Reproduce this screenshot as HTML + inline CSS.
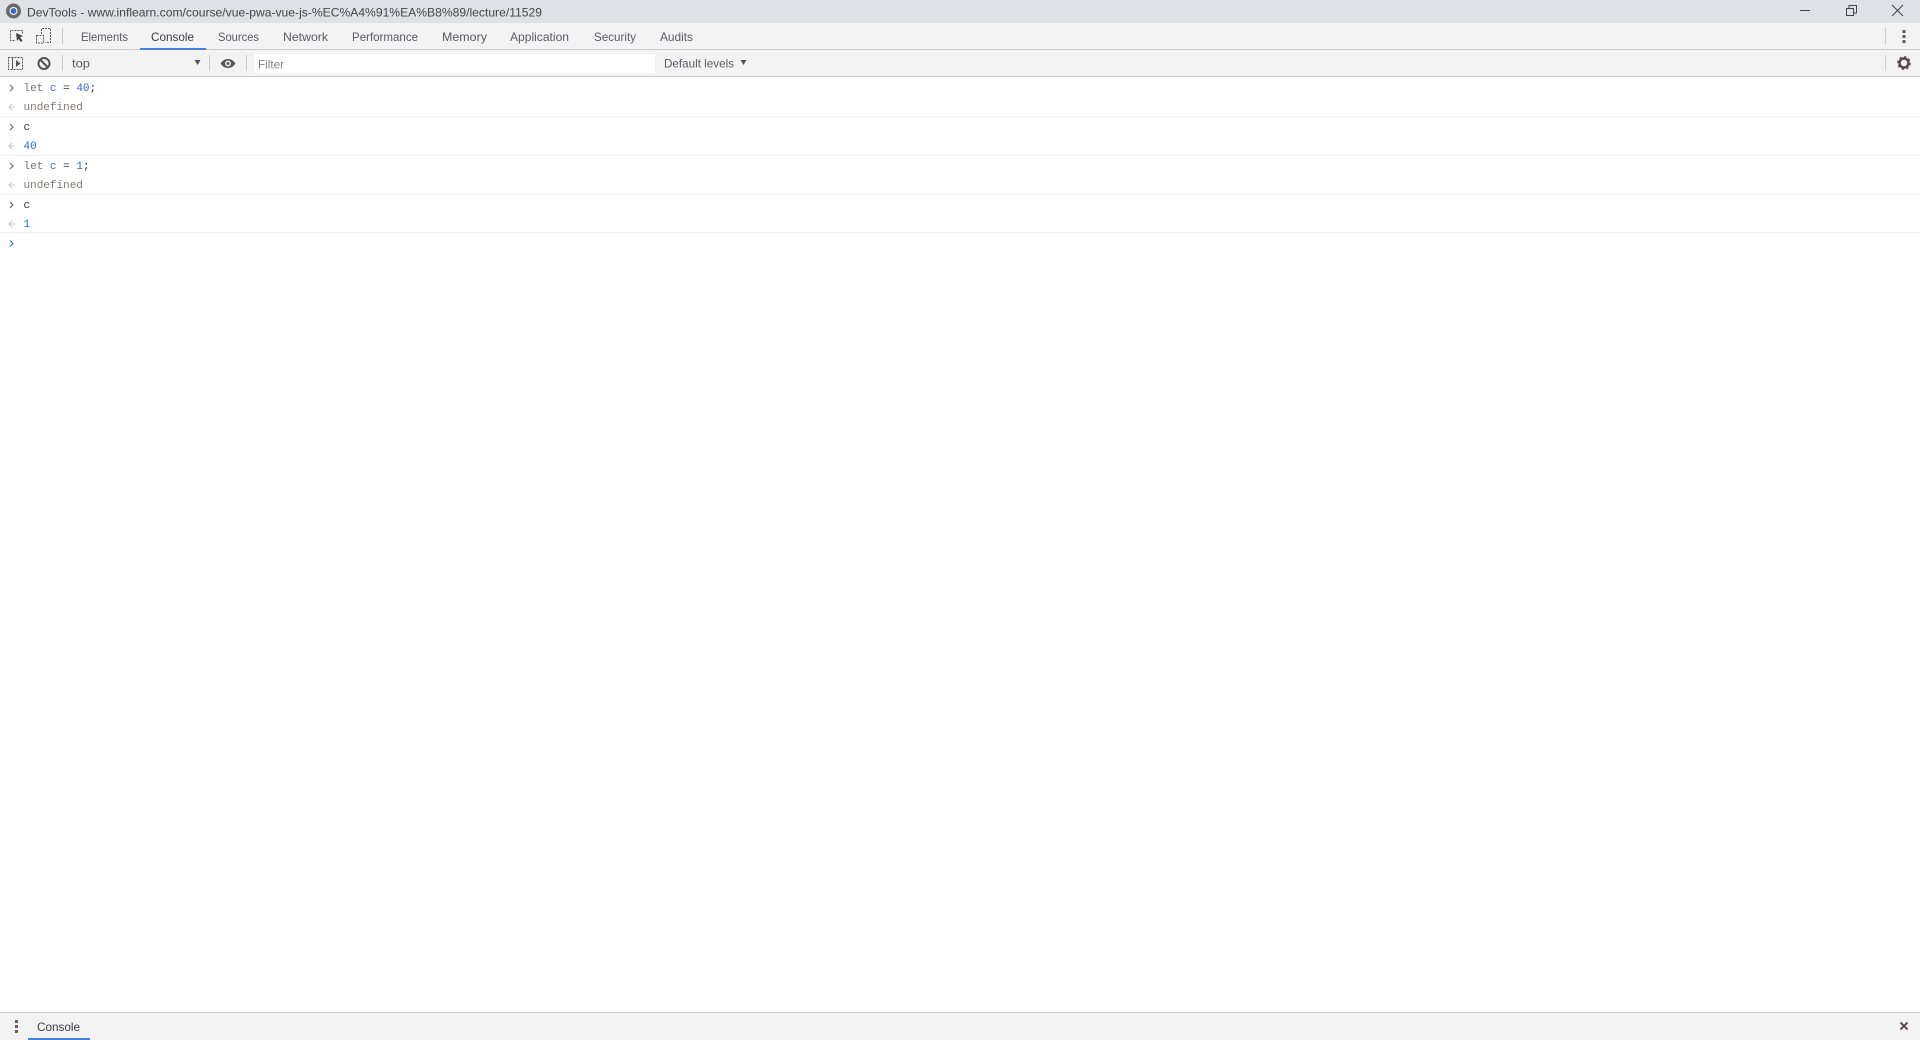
<!DOCTYPE html>
<html><head><meta charset="utf-8"><title>DevTools</title>
<style>
html,body{margin:0;padding:0;background:#fff;width:1920px;height:1040px;overflow:hidden}
svg{display:block}
.s{font-family:"Liberation Sans",sans-serif;font-size:12px;fill:#5a5b63}
.m{font-family:"Liberation Mono",monospace;font-size:11px}
</style></head><body>
<svg width="1920" height="1040" viewBox="0 0 1920 1040" xmlns="http://www.w3.org/2000/svg">
<!-- title bar -->
<rect width="1920" height="23" fill="#dee1e6"/>
<circle cx="13.5" cy="11" r="7.5" fill="#6e6763"/>
<circle cx="13.5" cy="11" r="4" fill="#fff"/>
<circle cx="13.5" cy="11" r="3" fill="#3b6fc4"/>
<text class="s" x="27" y="16.500" textLength="515" lengthAdjust="spacingAndGlyphs" style="fill:#454545">DevTools - www.inflearn.com/course/vue-pwa-vue-js-%EC%A4%91%EA%B8%89/lecture/11529</text>
<path d="M1800 10.500h10" stroke="#444" fill="none"/>
<path d="M1846.500 8.500h7v7h-7zM1849 8v-2.500h7.500v7.500h-2.500" stroke="#444" fill="none"/>
<path d="M1892 5l11 11M1903 5l-11 11" stroke="#444" fill="none"/>
<!-- tab bar -->
<rect y="23" width="1920" height="26" fill="#f3f3f3"/>
<rect y="49" width="1920" height="1" fill="#ccc"/>
<path d="M14.500 40.500h-4v-10h12v3" stroke="#5a5a5a" stroke-dasharray="2 1" fill="none"/>
<path d="M16 33l7 3-3 1.500 2.500 3-1.500 1.500-2.500-3-1.500 2z" fill="#444"/>
<path d="M41.500 34v-5.500h9v14h-5" stroke="#5a5a5a" stroke-dasharray="2 1" fill="none"/>
<rect x="36.500" y="35.500" width="7" height="7.500" stroke="#5a5a5a" stroke-dasharray="2 1" fill="none"/>
<rect x="62" y="28" width="1" height="16" fill="#ccc"/>
<text class="s" x="81" y="41" textLength="47" lengthAdjust="spacingAndGlyphs">Elements</text>
<text class="s" x="151" y="41" textLength="43" lengthAdjust="spacingAndGlyphs" style="fill:#3c3c44">Console</text>
<rect x="140" y="48" width="66" height="2" fill="#4a80d6"/>
<text class="s" x="218" y="41" textLength="41" lengthAdjust="spacingAndGlyphs">Sources</text>
<text class="s" x="283" y="41" textLength="45" lengthAdjust="spacingAndGlyphs">Network</text>
<text class="s" x="352" y="41" textLength="66" lengthAdjust="spacingAndGlyphs">Performance</text>
<text class="s" x="442" y="41" textLength="45" lengthAdjust="spacingAndGlyphs">Memory</text>
<text class="s" x="510" y="41" textLength="59" lengthAdjust="spacingAndGlyphs">Application</text>
<text class="s" x="594" y="41" textLength="42" lengthAdjust="spacingAndGlyphs">Security</text>
<text class="s" x="660" y="41" textLength="33" lengthAdjust="spacingAndGlyphs">Audits</text>
<rect x="1885" y="28" width="1" height="16" fill="#ccc"/>
<g fill="#6a5a5a"><rect x="1902.500" y="30" width="3" height="3"/><rect x="1902.500" y="35" width="3" height="3"/><rect x="1902.500" y="40" width="3" height="3"/></g>
<!-- toolbar -->
<rect y="50" width="1920" height="26" fill="#f3f3f3"/>
<rect y="76" width="1920" height="1" fill="#ccc"/>
<rect x="8.500" y="57.500" width="14" height="12" stroke="#555" stroke-dasharray="2 1" fill="none"/>
<path d="M12.500 58v11" stroke="#555" fill="none"/>
<path d="M16 60l4.500 3.500-4.500 3.500z" fill="#555"/>
<circle cx="44" cy="63.500" r="5.500" stroke="#555" stroke-width="2" fill="none"/>
<path d="M40 59.500l8 8" stroke="#555" stroke-width="2"/>
<rect x="62" y="55" width="1" height="16" fill="#ccc"/>
<text class="s" x="72" y="67.500" textLength="18" lengthAdjust="spacingAndGlyphs">top</text>
<path d="M194.500 60h6l-3 5z" fill="#555"/>
<rect x="209" y="55" width="1" height="16" fill="#ccc"/>
<path d="M220.500 63.500c4-6 11-6 15 0c-4 6-11 6-15 0z" fill="#555"/>
<circle cx="228" cy="63.500" r="3" fill="#f3f3f3"/>
<circle cx="228" cy="63.500" r="1.500" fill="#555"/>
<rect x="246" y="55" width="1" height="16" fill="#ccc"/>
<rect x="254" y="54" width="401" height="19" fill="#fff"/>
<text class="s" x="258" y="68.500" textLength="26" lengthAdjust="spacingAndGlyphs" style="fill:#808084">Filter</text>
<text class="s" x="664" y="67.500" textLength="70" lengthAdjust="spacingAndGlyphs">Default levels</text>
<path d="M740.500 60h6l-3 5z" fill="#555"/>
<rect x="1885" y="55" width="1" height="16" fill="#ccc"/>
<circle cx="1904" cy="63" r="4.500" stroke="#5a4c4c" stroke-width="2.500" fill="none"/>
<circle cx="1904" cy="63" r="6.200" stroke="#5a4c4c" stroke-width="1.300" stroke-dasharray="2.400 2.450" fill="none"/>
<!-- console -->
<g fill="none" stroke="#7a6a6a" stroke-width="1.200">
<path d="M10 85l3 3-3 3M10 124l3 3-3 3M10 163l3 3-3 3M10 202l3 3-3 3"/>
</g>
<path d="M10 240.500l3 3-3 3" fill="none" stroke="#3a78d8" stroke-width="1.200"/>
<g fill="none" stroke="#c8c8c8" stroke-width="1.100">
<path d="M12 104l-3 3 3 3M9 107h6M12 143l-3 3 3 3M9 146h6M12 182l-3 3 3 3M9 185h6M12 221l-3 3 3 3M9 224h6"/>
</g>
<g fill="#f0f0f0"><rect y="116" width="1920" height="1"/><rect y="155" width="1920" height="1"/><rect y="194" width="1920" height="1"/><rect y="232" width="1920" height="1"/></g>
<g class="m">
<text class="m" x="23.500" y="91" xml:space="preserve"><tspan fill="#7f6f6f">let</tspan><tspan fill="#3b6fb4"> c</tspan><tspan fill="#333"> = </tspan><tspan fill="#2f6ad0">40</tspan><tspan fill="#333">;</tspan></text>
<text class="m" x="23.500" y="110" fill="#857878">undefined</text>
<text class="m" x="23.500" y="130" fill="#333">c</text>
<text class="m" x="23.500" y="149" fill="#2f6ad0">40</text>
<text class="m" x="23.500" y="169" xml:space="preserve"><tspan fill="#7f6f6f">let</tspan><tspan fill="#3b6fb4"> c</tspan><tspan fill="#333"> = </tspan><tspan fill="#2f6ad0">1</tspan><tspan fill="#333">;</tspan></text>
<text class="m" x="23.500" y="188" fill="#857878">undefined</text>
<text class="m" x="23.500" y="208" fill="#333">c</text>
<text class="m" x="23.500" y="227" fill="#2f6ad0">1</text>
</g>
<!-- drawer -->
<rect y="1012" width="1920" height="28" fill="#f3f3f3"/>
<rect y="1012" width="1920" height="1" fill="#ccc"/>
<g fill="#6a5a5a"><rect x="15" y="1020" width="3" height="3"/><rect x="15" y="1025" width="3" height="3"/><rect x="15" y="1030" width="3" height="3"/></g>
<text class="s" x="37" y="1031" textLength="43" lengthAdjust="spacingAndGlyphs" style="fill:#3c3c44">Console</text>
<rect x="28" y="1038" width="62" height="2" fill="#4a80d6"/>
<path d="M1900.500 1022.500l7 7M1907.500 1022.500l-7 7" stroke="#5a4c4c" stroke-width="2"/>
</svg>
</body></html>
